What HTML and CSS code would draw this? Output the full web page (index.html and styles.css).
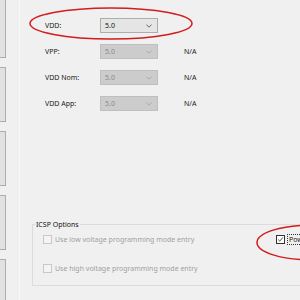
FILE: index.html
```html
<!DOCTYPE html>
<html lang="en">
<head>
    <meta charset="UTF-8">
    <meta name="viewport" content="width=device-width, initial-scale=1.0">
    <title>Power Settings</title>
    <link rel="stylesheet" href="styles.css">
</head>
<body>
    <div class="window">
        <!-- left nav buttons -->
        <div class="side">
            <div class="side-btn"></div>
            <div class="side-btn"></div>
            <div class="side-btn"></div>
            <div class="side-btn"></div>
            <div class="side-btn"></div>
        </div>

        <div class="main">
            <div class="power-grid">
                <span class="label">VDD:</span>
                <div class="combo">
                    <span>5.0</span>
                    <svg class="chev" viewBox="0 0 7 4"><path d="M0.5 0.5 L3.5 3.3 L6.5 0.5" /></svg>
                </div>
                <span></span>

                <span class="label">VPP:</span>
                <div class="combo disabled">
                    <span>5.0</span>
                    <svg class="chev" viewBox="0 0 7 4"><path d="M0.5 0.5 L3.5 3.3 L6.5 0.5" /></svg>
                </div>
                <span class="na">N/A</span>

                <span class="label">VDD Nom:</span>
                <div class="combo disabled">
                    <span>5.0</span>
                    <svg class="chev" viewBox="0 0 7 4"><path d="M0.5 0.5 L3.5 3.3 L6.5 0.5" /></svg>
                </div>
                <span class="na">N/A</span>

                <span class="label">VDD App:</span>
                <div class="combo disabled">
                    <span>5.0</span>
                    <svg class="chev" viewBox="0 0 7 4"><path d="M0.5 0.5 L3.5 3.3 L6.5 0.5" /></svg>
                </div>
                <span class="na">N/A</span>
            </div>

            <!-- ICSP group -->
            <fieldset class="icsp">
                <legend>ICSP Options</legend>
                <div class="icsp-row">
                    <label class="check disabled"><span class="box"></span>Use low voltage programming mode entry</label>
                    <label class="check"><span class="box checked"><svg viewBox="0 0 9 9"><path d="M1.5 4.5 L3.6 6.6 L7.5 1.8" /></svg></span><span class="focus">Power target</span></label>
                </div>
                <div class="icsp-row">
                    <label class="check disabled"><span class="box"></span>Use high voltage programming mode entry</label>
                </div>
            </fieldset>
        </div>

        <svg class="marks" viewBox="0 0 300 300">
            <ellipse cx="111" cy="23.5" rx="81" ry="15.5" />
            <ellipse cx="312" cy="242.5" rx="55" ry="17.5" />
        </svg>
    </div>
</body>
</html>
```

FILE: styles.css
```css
* {
    margin: 0;
    padding: 0;
    box-sizing: border-box;
}

body {
    background-color: #f0f0f0;
    font-family: "Noto Sans", "Open Sans", sans-serif;
    font-size: 7px;
    color: #1a1a1a;
    width: 300px;
    height: 300px;
    overflow: hidden;
}

.window {
    position: relative;
    display: flex;
    width: 300px;
    height: 300px;
}

/* Left button strip */
.side {
    width: 6px;
    flex-shrink: 0;
    display: flex;
    flex-direction: column;
    gap: 9px;
}

.side-btn {
    height: 55px;
    flex-shrink: 0;
    background-color: #e1e1e1;
    border: 1px solid #adadad;
    border-left: none;
}

.side-btn:first-child {
    height: 58px;
    border-top: none;
}

.main {
    flex: 1;
    margin-left: 13px;
    border-left: 1px solid #f8f8f8;
    padding-top: 18px;
}

/* Power rows */
.power-grid {
    display: grid;
    grid-template-columns: 55px 58px auto;
    row-gap: 11px;
    align-items: center;
    padding-left: 25px;
}

.combo {
    height: 15px;
    display: flex;
    align-items: center;
    justify-content: space-between;
    padding: 0 5px 0 4px;
    background-color: #e5e5e5;
    border: 1px solid #adadad;
    color: #111;
}

.combo.disabled {
    background-color: #cccccc;
    border-color: #bfbfbf;
    color: #8a8a8a;
}

.chev {
    width: 6px;
    height: 4px;
}

.chev path {
    fill: none;
    stroke: #444;
    stroke-width: 0.9;
}

.combo.disabled .chev path {
    stroke: #a0a0a0;
}

.na {
    padding-left: 26px;
}

/* ICSP group box */
.icsp {
    margin: 109px 0 0 12px;
    width: 300px;
    height: 66px;
    border: 1px solid #dcdcdc;
    padding: 6px 0 0 10px;
}

.icsp legend {
    margin-left: -8px;
    padding: 0 1px;
    color: #111;
}

.icsp-row {
    display: grid;
    grid-template-columns: 233px auto;
    height: 29px;
}

.check {
    display: flex;
    align-items: center;
    gap: 3px;
    height: 9px;
    white-space: nowrap;
}

.check.disabled {
    color: #a0a0a0;
}

.box {
    width: 9px;
    height: 9px;
    flex-shrink: 0;
    border: 1px solid #c8c8c8;
    background-color: #f4f4f4;
}

.box.checked {
    border-color: #333;
    background-color: #fff;
}

.box svg {
    display: block;
    width: 7px;
    height: 7px;
}

.box svg path {
    fill: none;
    stroke: #222;
    stroke-width: 1;
}

.focus {
    outline: 1px dotted #333;
    padding: 0 1px;
}

/* Red annotation marks */
.marks {
    position: absolute;
    top: 0;
    left: 0;
    width: 300px;
    height: 300px;
    pointer-events: none;
}

.marks ellipse {
    fill: none;
    stroke: #d31c1c;
    stroke-width: 1.5;
}
```
